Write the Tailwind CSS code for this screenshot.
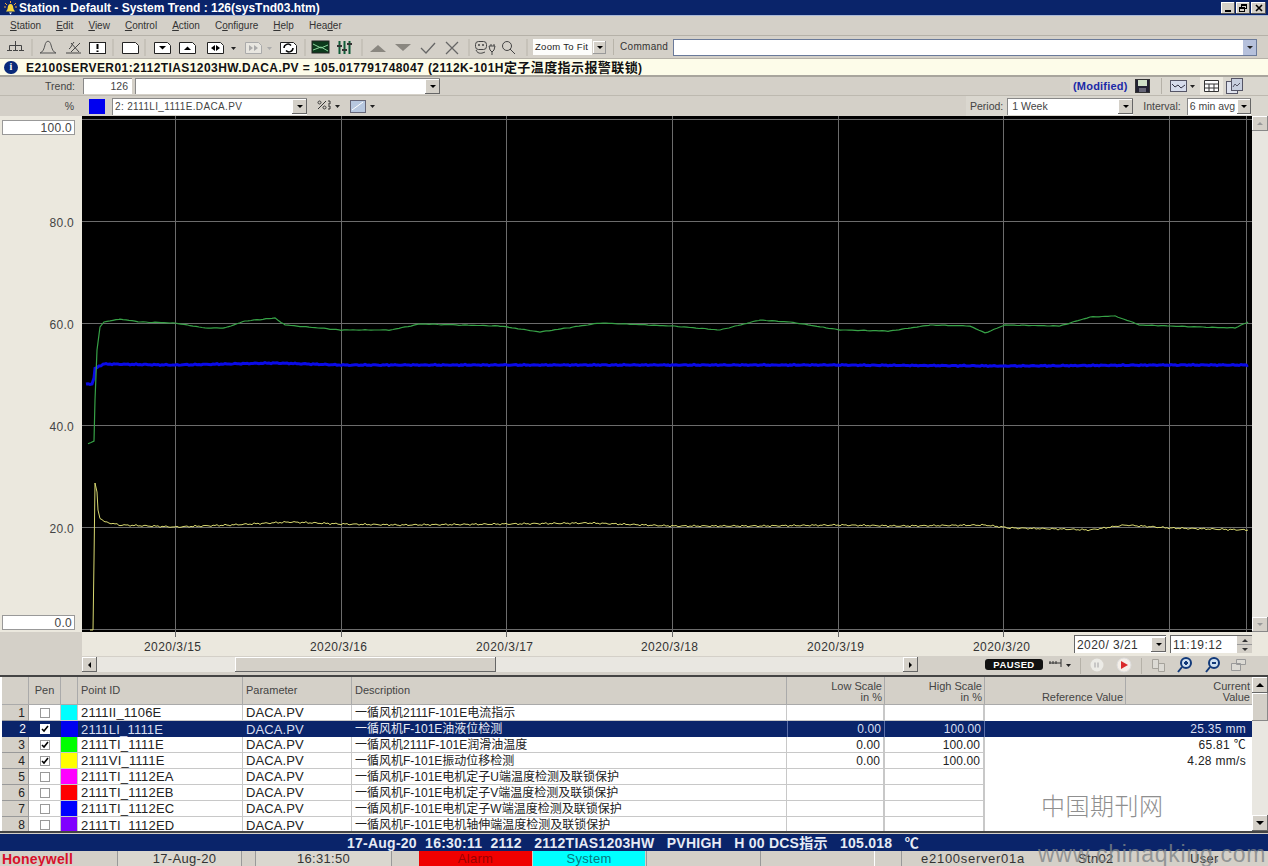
<!DOCTYPE html>
<html><head><meta charset="utf-8"><script src="https://cdn.jsdelivr.net/npm/@tailwindcss/browser@4"></script></head>
<body class="m-0 overflow-hidden">
<div class="relative w-[1268px] h-[866px] overflow-hidden flex flex-col bg-[#d4d0c8] text-[#222] text-[11px] leading-none font-['Liberation_Sans','Noto_Sans_CJK_SC',sans-serif]">

<!-- title -->
<div class="h-[16px] shrink-0 bg-[#0a246a] text-white flex items-center pl-[3px] pr-[2px] border-b border-[#a9b8d8]">
  <svg class="w-[15px] h-[14px]" viewBox="0 0 15 14"><path d="M7.5 3c-2 0-2.6 2-2.8 4-.2 1.800-1.200 2.500-1.700 3.500h9c-.5-1-1.500-1.700-1.700-3.500C10.100 5 9.500 3 7.500 3z" fill="#f5d63d"/><path d="M6 11.500h3l-1.500 2z" fill="#fff"/><path d="M2 2l2 2M13 2l-2 2M7.500 0v2M1 6h2M14 6h-2" stroke="#f2a53a"/></svg>
  <span class="ml-[1px] font-bold text-[12px]">Station - Default - System Trend : 126(sysTnd03.htm)</span>
  <div class="ml-auto flex gap-[1px]">
    <div class="w-[14px] h-[12px] bg-[#d4d0c8] text-black flex items-end justify-center pb-[2px] shadow-[inset_-1px_-1px_#555,inset_1px_1px_#fff]"><div class="w-[6px] h-[2px] bg-black"></div></div>
    <div class="w-[14px] h-[12px] bg-[#d4d0c8] shadow-[inset_-1px_-1px_#555,inset_1px_1px_#fff] relative"><div class="absolute left-[5px] top-[2px] w-[6px] h-[5px] border border-black border-t-2"></div><div class="absolute left-[3px] top-[5px] w-[6px] h-[5px] bg-[#d4d0c8] border border-black border-t-2"></div></div>
    <div class="w-[15px] h-[12px] bg-[#d4d0c8] shadow-[inset_-1px_-1px_#555,inset_1px_1px_#fff] flex items-center justify-center"><svg class="w-[8px] h-[8px]" viewBox="0 0 8 8"><path d="M1 1l6 6M7 1l-6 6" stroke="#000" stroke-width="1.600"/></svg></div>
  </div>
</div>

<!-- menu -->
<div class="h-[20px] shrink-0 flex items-center pl-[10px] gap-[15px] text-[10px] text-[#333] border-b border-[#b5b1a8]">
  <span><u>S</u>tation</span><span><u>E</u>dit</span><span><u>V</u>iew</span><span><u>C</u>ontrol</span><span><u>A</u>ction</span><span>C<u>o</u>nfigure</span><span><u>H</u>elp</span><span>Hea<u>d</u>er</span>
</div>

<!-- toolbar -->
<div class="h-[23px] shrink-0 flex items-center relative border-b border-[#b5b1a8]">
  <svg class="w-[674px] h-[22px] shrink-0" viewBox="0 36 674 22" fill="none" stroke="#444" stroke-width="1">
    <path d="M15.500 41v4M9.500 50v-4.500h12V50M15.500 45v5M7 50.500h5M19 50.500h5M13 50.500h5"/>
    <path d="M32 39v17M113 39v17M145 39v17M305 39v17M362 39v17M469 39v17M527 39v17" stroke="#b8b4aa"/>
    <path d="M40 53c3-1 4-4 5-8 1-5 5-5 6 0 1 4 2 7 5 8z" stroke="#555"/>
    <path d="M66 53h15M71 43l8 9M80 43l-9 9M69 49c2-1 3-5 5-7" stroke="#444"/>
    <rect x="89.500" y="42.500" width="16" height="11" fill="#fff" stroke="#222"/><path d="M97.500 44v5M97.500 50.500v1.500" stroke="#000" stroke-width="2"/>
    <path d="M122.500 42.500h13l3 3v8h-16z" fill="#fff" stroke="#222"/>
    <path d="M154.500 42.500h13l3 3v8h-16z" fill="#fff" stroke="#222"/><path d="M159 46h7l-3.500 3.500z" fill="#000" stroke="none"/>
    <path d="M179.500 42.500h13l3 3v8h-16z" fill="#fff" stroke="#222"/><path d="M184 50h7l-3.500-3.500z" fill="#000" stroke="none"/>
    <path d="M207.500 42.500h13l3 3v8h-16z" fill="#fff" stroke="#222"/><path d="M215 45v6l-4-3zM216 45v6l4-3z" fill="#000" stroke="none"/>
    <path d="M231 47h5l-2.500 3z" fill="#222" stroke="none"/>
    <path d="M245.500 42.500h13l3 3v8h-16z" fill="#e8e6e0" stroke="#aaa"/><path d="M249 45v6l4-3zM254 45v6l4-3z" fill="#aaa" stroke="none"/>
    <path d="M267 47h5l-2.500 3z" fill="#aaa" stroke="none"/>
    <path d="M280.500 42.500h13l3 3v8h-16z" fill="#fff" stroke="#222"/><path d="M284 48a4 4 0 0 1 7-2.500M293 48a4 4 0 0 1-7 2.500" stroke="#000" stroke-width="1.500"/>
    <rect x="312" y="41" width="17" height="12" fill="#0c3a1c" stroke="#222"/><path d="M313 44l8 4 7-3M313 50l8-3 7 4" stroke="#8fd9a0"/>
    <path d="M339.500 41v13M344.500 41v13M349.500 41v13" stroke="#0f5c38" stroke-width="2"/><path d="M337 46h5M342 50h5M347 44h5" stroke="#333" stroke-width="2"/>
    <path d="M370 52l8-7 8 7z" fill="#8a8780" stroke="none"/><path d="M395 44h16l-8 7z" fill="#8a8780" stroke="none"/>
    <path d="M421 48l5 5 9-10" stroke="#666" stroke-width="1.300"/><path d="M446 42l12 12M458 42l-12 12" stroke="#666" stroke-width="1.300"/>
    <rect x="475.500" y="41.500" width="11" height="8" rx="3"/><path d="M478 45h2M482 45h2" stroke-width="1.500"/><path d="M476 50c2 5 7 3 9 2M489 46h6l-1 4-2 2-2-2zM491 44v2M494 44v2M492 52v3"/>
    <circle cx="507" cy="46" r="4.500"/><path d="M510 49l5 5"/>
  </svg>
  <div class="absolute left-[533px] top-[3px] w-[74px] h-[16px] flex items-center">
    <div class="w-[59px] h-full bg-[#fdfdfb] flex items-center pl-[2px] text-[9.500px] tracking-[0.3px]">Zoom To Fit</div>
    <div class="w-[13px] h-[13px] ml-[1px] bg-[#d4d0c8] flex items-center justify-center shadow-[inset_-1px_-1px_#999,inset_1px_1px_#fff]"><div class="border-x-[3px] border-x-transparent border-t-[3px] border-t-black"></div></div>
  </div>
  <div class="absolute left-[613px] top-[3px] h-[16px] border-l border-[#b8b4aa]"></div>
  <span class="absolute left-[620px] top-[6px] text-[10px] tracking-[0.3px] text-[#333]">Command</span>
  <div class="absolute left-[673px] top-[3px] w-[584px] h-[17px] bg-white border border-[#6a7a9a] flex justify-end">
    <div class="w-[13px] h-full bg-[#b6c1dc] flex items-center justify-center"><div class="border-x-[3px] border-x-transparent border-t-[3px] border-t-[#222]"></div></div>
  </div>
</div>

<!-- message -->
<div class="h-[18px] shrink-0 bg-[#fdfce9] border-b-2 border-[#a8a59d] flex items-center pl-[4px] gap-[8px] font-bold text-[12px] text-[#111]">
  <span class="w-[14px] h-[13px] rounded-full bg-[#0a2a7a] text-white text-[10px] flex items-center justify-center font-['Liberation_Serif']">i</span>
  <span class="tracking-[0.42px] whitespace-nowrap">E2100SERVER01:2112TIAS1203HW.DACA.PV = 105.017791748047 (2112K-101H<span class="text-[13px]">定子温度指示报警联锁</span>)</span>
</div>

<!-- trend row -->
<div class="h-[19px] shrink-0 flex items-center relative border-b border-[#bdb9b0] text-[10.500px] text-[#444]">
  <span class="w-[75px] text-right">Trend:</span>
  <div class="ml-[8px] w-[49px] h-[16px] bg-white border-l border-t border-[#888] flex items-center justify-end pr-[4px]">126</div>
  <div class="ml-[3px] w-[305px] h-[16px] bg-white border-l border-t border-[#888] flex justify-end items-center">
    <div class="w-[15px] h-[15px] bg-[#d4d0c8] flex items-center justify-center shadow-[inset_-1px_-1px_#666,inset_1px_1px_#fff]"><div class="border-x-[3px] border-x-transparent border-t-[3px] border-t-black"></div></div>
  </div>
  <div class="absolute right-0 top-0 w-[198px] h-[18px] bg-[#dad7cf] flex items-center pl-[3px]">
    <span class="font-bold text-[11px] text-[#1a2aa8] tracking-[0.2px]">(Modified)</span>
    <svg class="ml-[7px] w-[15px] h-[14px]" viewBox="0 0 15 14"><rect x=".5" y=".5" width="14" height="13" fill="#223" stroke="#333"/><rect x="3" y="1" width="9" height="6" fill="#cfe0c8"/><rect x="4" y="9" width="7" height="4" fill="#667"/></svg>
    <div class="ml-[11px] h-[16px] border-l border-[#b5b1a8]"></div>
    <svg class="ml-[8px] w-[26px] h-[14px]" viewBox="0 0 26 14" fill="none"><rect x=".5" y="1.500" width="16" height="11" fill="#d6dcec" stroke="#556"/><path d="M2 5l3 3 3-2 3 3 4-3" stroke="#334"/><path d="M20 6h5l-2.500 3z" fill="#222"/></svg>
    <div class="ml-[4px] w-[23px] h-[18px] bg-[#ece9e0] flex items-center justify-center"><svg class="w-[15px] h-[12px]" viewBox="0 0 15 12" fill="#fff" stroke="#333"><path d="M.5.5h14v11H.5zM.5 4h14M.5 8h14M5 4v7.500M10 4v7.500"/></svg></div>
    <svg class="ml-[3px] w-[17px] h-[16px]" viewBox="0 0 17 16" fill="none" stroke="#556"><rect x=".5" y="3.500" width="11" height="12" fill="#dfe3ee"/><rect x="5.500" y=".5" width="11" height="12" fill="#c8cfdf"/><path d="M7 9l2-3 2 2 3-3"/></svg>
  </div>
</div>

<!-- pen row -->
<div class="h-[20px] shrink-0 flex items-center relative text-[10.500px] text-[#444]">
  <span class="w-[75px] text-right pr-[1px]">%</span>
  <div class="ml-[14px] w-[16px] h-[15px] bg-[#0000f0]"></div>
  <div class="ml-[7px] w-[195px] h-[17px] bg-white border-l border-t border-[#888] flex items-center justify-between pl-[2px] text-[10px] tracking-[0.35px]">
    <span>2: 2111LI_1111E.DACA.PV</span>
    <div class="w-[15px] h-[15px] bg-[#d4d0c8] flex items-center justify-center shadow-[inset_-1px_-1px_#666,inset_1px_1px_#fff]"><div class="border-x-[3px] border-x-transparent border-t-[3px] border-t-black"></div></div>
  </div>
  <svg class="ml-[10px] w-[60px] h-[16px]" viewBox="0 0 60 16" fill="none"><path d="M1 11l8-8M2.500 3a1.500 1.500 0 1 0 .01 0M7.500 8a1.500 1.500 0 1 0 .01 0" stroke="#333"/><path d="M11 3h2v3h-2M11 8h2v3h-2" stroke="#333"/><path d="M18 7h5l-2.500 3z" fill="#222"/><rect x="33.500" y="2.500" width="15" height="12" fill="#b7c7df" stroke="#667"/><path d="M35 12l11-8" stroke="#fff"/><path d="M53 7h5l-2.500 3z" fill="#222"/></svg>
  <div class="absolute right-0 top-0 h-[20px] w-[302px] bg-[#dad7cf] flex items-center pl-[4px]">
    <span>Period:</span>
    <div class="ml-[4px] w-[126px] h-[17px] bg-white border-l border-t border-[#888] flex items-center justify-between pl-[4px]"><span>1 Week</span><div class="w-[15px] h-[15px] bg-[#d4d0c8] flex items-center justify-center shadow-[inset_-1px_-1px_#666,inset_1px_1px_#fff]"><div class="border-x-[3px] border-x-transparent border-t-[3px] border-t-black"></div></div></div>
    <span class="ml-[10px]">Interval:</span>
    <div class="ml-[6px] w-[64px] h-[17px] bg-white border-l border-t border-[#888] flex items-center justify-between pl-[2px]"><span>6 min avg</span><div class="w-[14px] h-[15px] bg-[#d4d0c8] flex items-center justify-center shadow-[inset_-1px_-1px_#666,inset_1px_1px_#fff]"><div class="border-x-[3px] border-x-transparent border-t-[3px] border-t-black"></div></div></div>
  </div>
</div>

<!-- chart row -->
<div class="h-[516px] shrink-0 flex">
  <div class="w-[82px] relative bg-[#ebe8de] text-[12px] text-[#444] tracking-[0.3px]">
    <div class="absolute left-[2px] top-[4px] w-[73px] h-[15px] bg-white border border-[#999] flex items-center justify-end pr-[2px]">100.0</div>
    <span class="absolute right-[8px] top-[101px]">80.0</span>
    <span class="absolute right-[8px] top-[203px]">60.0</span>
    <span class="absolute right-[8px] top-[305px]">40.0</span>
    <span class="absolute right-[8px] top-[407px]">20.0</span>
    <div class="absolute left-[2px] top-[499px] w-[73px] h-[15px] bg-white border border-[#999] flex items-center justify-end pr-[2px]">0.0</div>
  </div>
  <svg id="chart" class="w-[1170px] h-[516px] bg-black" viewBox="82 116 1170 516" fill="none">
    <g stroke="#6c6c6c" stroke-width="1">
      <path d="M175.500 116v516M341.500 116v516M506.500 116v516M672.500 116v516M838.500 116v516M1003.500 116v516M1169.500 116v516M1246.500 116v516"/>
      <path d="M82 119.500h1170M82 221.500h1170M82 323.500h1170M82 425.500h1170M82 527.500h1170M82 629.500h1170"/>
    </g>
    <polyline id="b" stroke="#0a0ae6" stroke-width="3" points="86,384 92,384 94,378 95,369 99,366 104,364 175,365 275,363 341,365 506,365 672,365 838,365 1003,366 1169,365 1248,365"/>
    <polyline id="g" stroke="#37a247" stroke-width="1.200" points="88,444 94,441 95,400 97,350 100,327 104,322 120,319 140,322 175,323 205,328 225,328 245,321 275,318 285,325 341,330 390,330 420,324 500,326 540,332 600,323 672,326 720,330 760,320 790,322 840,330 890,331 930,325 970,326 985,333 1005,325 1060,326 1090,317 1115,316 1140,325 1200,327 1235,328 1248,322"/>
    <polyline id="y" stroke="#d8d870" stroke-width="1" points="90,630 93,630 94,560 95,483 97,492 98,510 100,518 105,522 120,525 150,526 175,527 230,525 290,522 341,524 400,525 506,524 590,523 672,526 760,526 838,525 900,526 985,525 1010,528 1060,529 1090,530 1125,525 1170,528 1248,530"/>
  </svg>
  <div class="w-[16px] flex flex-col bg-[#e8e6e0]">
    <div class="h-[15px] bg-[#d4d0c8] flex items-center justify-center shadow-[inset_-1px_-1px_#888,inset_1px_1px_#fff]"><div class="border-x-[3px] border-x-transparent border-b-[3px] border-b-[#999]"></div></div>
    <div class="flex-1"></div>
    <div class="h-[15px] bg-[#d4d0c8] flex items-center justify-center shadow-[inset_-1px_-1px_#888,inset_1px_1px_#fff]"><div class="border-x-[3px] border-x-transparent border-t-[3px] border-t-[#999]"></div></div>
  </div>
</div>

<!-- time axis -->
<div class="h-[24px] shrink-0 flex">
  <div class="w-[82px]"></div>
  <div class="flex-1 bg-[#ebe8de] relative text-[12px] text-[#333] tracking-[0.45px]">
    <div class="absolute left-[93px] top-0 w-px h-[5px] bg-[#666]"></div>
    <div class="absolute left-[259px] top-0 w-px h-[5px] bg-[#666]"></div>
    <div class="absolute left-[424px] top-0 w-px h-[5px] bg-[#666]"></div>
    <div class="absolute left-[590px] top-0 w-px h-[5px] bg-[#666]"></div>
    <div class="absolute left-[756px] top-0 w-px h-[5px] bg-[#666]"></div>
    <div class="absolute left-[921px] top-0 w-px h-[5px] bg-[#666]"></div>
    <span class="absolute left-[62px] top-[9px]">2020/3/15</span>
    <span class="absolute left-[228px] top-[9px]">2020/3/16</span>
    <span class="absolute left-[394px] top-[9px]">2020/3/17</span>
    <span class="absolute left-[559px] top-[9px]">2020/3/18</span>
    <span class="absolute left-[725px] top-[9px]">2020/3/19</span>
    <span class="absolute left-[891px] top-[9px]">2020/3/20</span>
    <div class="absolute left-[992px] top-[3px] w-[92px] h-[18px] bg-white border-l border-t border-[#666] flex items-center justify-between pl-[2px]">
      <span>2020/ 3/21</span><div class="w-[15px] h-[15px] bg-[#d4d0c8] flex items-center justify-center shadow-[inset_-1px_-1px_#666,inset_1px_1px_#fff]"><div class="border-x-[3px] border-x-transparent border-t-[3px] border-t-black"></div></div>
    </div>
    <div class="absolute left-[1088px] top-[3px] w-[82px] h-[18px] bg-white border-l border-t border-[#666] flex items-center justify-between pl-[2px]">
      <span>11:19:12</span>
      <div class="w-[15px] h-full flex flex-col bg-[#d4d0c8]"><div class="flex-1 flex items-center justify-center border-b border-[#999]"><div class="border-x-[3px] border-x-transparent border-b-[3px] border-b-[#333]"></div></div><div class="flex-1 flex items-center justify-center"><div class="border-x-[3px] border-x-transparent border-t-[3px] border-t-[#333]"></div></div></div>
    </div>
  </div>
</div>

<!-- h scroll -->
<div class="h-[19px] shrink-0 flex items-start pt-[1px] relative">
  <div class="ml-[82px] w-[836px] h-[15px] shrink-0 bg-[#e9e7e1] flex items-center relative">
    <div class="w-[15px] h-[15px] bg-[#d4d0c8] flex items-center justify-center shadow-[inset_-1px_-1px_#666,inset_1px_1px_#fff]"><div class="border-y-[3px] border-y-transparent border-r-[3px] border-r-black"></div></div>
    <div class="absolute left-[153px] top-0 w-[261px] h-[15px] bg-[#d4d0c8] shadow-[inset_-1px_-1px_#666,inset_1px_1px_#fff]"></div>
    <div class="ml-auto w-[15px] h-[15px] bg-[#d4d0c8] flex items-center justify-center shadow-[inset_-1px_-1px_#666,inset_1px_1px_#fff]"><div class="border-y-[3px] border-y-transparent border-l-[3px] border-l-black"></div></div>
  </div>
  <div class="ml-[67px] mt-[2px] w-[58px] h-[11px] shrink-0 bg-[#111] rounded-[3px] text-white font-bold text-[9.500px] tracking-[0.4px] flex items-center justify-center">PAUSED</div>
  <svg class="ml-[5px] w-[220px] h-[18px] shrink-0" viewBox="0 0 220 18" fill="none">
    <path d="M1 6h12M13 2v8M2 4v3M5 4v3M8 4v3" stroke="#333"/><path d="M18 7h5l-2.500 3z" fill="#222"/>
    <path d="M32.500 1v16M93.500 1v16" stroke="#b5b1a8"/>
    <circle cx="49" cy="8" r="6.500" fill="#ecebe6"/><path d="M47 5.500v5M50 5.500v5" stroke="#bbb" stroke-width="1.500"/>
    <circle cx="76" cy="8" r="7" fill="#f5efe8" stroke="#ddd"/><path d="M73 4l7 4-7 4z" fill="#d92a2a"/>
    <path d="M104.500 2.500h6v9h-6zM110.500 6.500h6v8h-6z" stroke="#a5a29b" fill="#dcdad4"/>
    <circle cx="138" cy="6" r="5" fill="#cfe0f0" stroke="#123a7a" stroke-width="2"/><path d="M134 10l-4 5M136 6h4M138 4v4" stroke="#123a7a" stroke-width="2"/>
    <circle cx="166" cy="6" r="5" fill="#cfe0f0" stroke="#123a7a" stroke-width="2"/><path d="M162 10l-4 5M164 6h4" stroke="#123a7a" stroke-width="2"/>
    <path d="M183.500 6.500h9v7h-9zM188.500 2.500h9v5h-9z" stroke="#999" fill="#dcdad4"/>
  </svg>
</div>

<!-- table -->
<div class="h-[158px] shrink-0 border-y-2 border-[#444] flex bg-white">
  <div class="w-[1252px] text-[12px] grid grid-cols-[29px_32px_17px_165px_109px_435px_98px_100px_141px_126px] grid-rows-[28px_repeat(8,16px)] overflow-hidden">
    <div class="bg-[#d4d0c8] border-r border-b border-[#aaa] ml-[2px]"></div>
    <div class="bg-[#d4d0c8] border-r border-b border-[#aaa] flex items-center justify-center text-[11px] text-[#444]">Pen</div>
    <div class="bg-[#d4d0c8] border-r border-b border-[#aaa]"></div>
    <div class="bg-[#d4d0c8] border-r border-b border-[#aaa] flex items-center pl-[3px] text-[11px] text-[#444]">Point ID</div>
    <div class="bg-[#d4d0c8] border-r border-b border-[#aaa] flex items-center pl-[3px] text-[11px] text-[#444]">Parameter</div>
    <div class="bg-[#d4d0c8] border-r border-b border-[#aaa] flex items-center pl-[3px] text-[11px] text-[#444]">Description</div>
    <div class="bg-[#d4d0c8] border-r border-b border-[#aaa] text-right pr-[2px] pt-[4px] text-[11px] leading-[11px] text-[#444]">Low Scale<br>in %</div>
    <div class="bg-[#d4d0c8] border-r border-b border-[#aaa] text-right pr-[2px] pt-[4px] text-[11px] leading-[11px] text-[#444]">High Scale<br>in %</div>
    <div class="bg-[#d4d0c8] border-r border-b border-[#aaa] text-right pr-[2px] pt-[15px] text-[11px] leading-[11px] text-[#444]">Reference Value</div>
    <div class="bg-[#d4d0c8] border-b border-[#aaa] text-right pr-[2px] pt-[4px] text-[11px] leading-[11px] text-[#444]">Current<br>Value</div>

    <!-- row 1 -->
    <div class="ml-[2px] bg-[#d4d0c8] border-r border-b border-[#999] flex items-center justify-end pr-[3px]">1</div>
    <div class="border-r border-b border-[#c8c8c8] flex items-center justify-center"><span class="w-[10px] h-[10px] bg-white border border-[#999]"></span></div>
    <div class="bg-[#00ffff] border-r border-b border-[#c8c8c8]"></div>
    <div class="border-r border-b border-[#c8c8c8] flex items-center pl-[3px] text-[13px] tracking-[0.2px]">2111II_1106E</div>
    <div class="border-r border-b border-[#c8c8c8] flex items-center pl-[3px] text-[13px] tracking-[0.1px]">DACA.PV</div>
    <div class="border-r border-b border-[#c8c8c8] flex items-center pl-[3px]">一循风机2111F-101E电流指示</div>
    <div class="border-r-2 border-b border-[#c8c8c8]"></div>
    <div class="border-r-2 border-b border-[#c8c8c8]"></div>
    <div></div><div></div>

    <!-- row 2 selected -->
    <div class="ml-[2px] bg-[#0a246a] text-white flex items-center justify-end pr-[3px]">2</div>
    <div class="bg-[#0a246a] flex items-center justify-center"><span class="w-[10px] h-[10px] bg-white flex items-center justify-center"><svg class="w-[8px] h-[8px]" viewBox="0 0 8 8" fill="none"><path d="M1 4l2 2 4-5" stroke="#000" stroke-width="1.600"/></svg></span></div>
    <div class="bg-[#0000f0]"></div>
    <div class="bg-[#0a246a] text-[#d8def0] flex items-center pl-[3px] text-[13px] tracking-[0.2px]">2111LI_1111E</div>
    <div class="bg-[#0a246a] text-[#d8def0] flex items-center pl-[3px] text-[13px] tracking-[0.1px]">DACA.PV</div>
    <div class="bg-[#0a246a] text-[#e8ecf5] flex items-center pl-[3px]">一循风机F-101E油液位检测</div>
    <div class="bg-[#0a246a] text-[#d8def0] border-x border-[#5a6ea8] flex items-center justify-end pr-[3px] tracking-[0.1px]">0.00</div>
    <div class="bg-[#0a246a] text-[#d8def0] border-r border-[#5a6ea8] flex items-center justify-end pr-[3px] tracking-[0.1px]">100.00</div>
    <div class="bg-[#0a246a]"></div>
    <div class="bg-[#0a246a] text-[#d8def0] flex items-center justify-end pr-[6px] tracking-[0.3px]">25.35 mm</div>

    <!-- row 3 -->
    <div class="ml-[2px] bg-[#d4d0c8] border-r border-b border-[#999] flex items-center justify-end pr-[3px]">3</div>
    <div class="border-r border-b border-[#c8c8c8] flex items-center justify-center"><span class="w-[10px] h-[10px] bg-white border border-[#999] flex items-center justify-center"><svg class="w-[8px] h-[8px]" viewBox="0 0 8 8" fill="none"><path d="M1 4l2 2 4-5" stroke="#000" stroke-width="1.600"/></svg></span></div>
    <div class="bg-[#00ff00] border-r border-b border-[#c8c8c8]"></div>
    <div class="border-r border-b border-[#c8c8c8] flex items-center pl-[3px] text-[13px] tracking-[0.2px]">2111TI_1111E</div>
    <div class="border-r border-b border-[#c8c8c8] flex items-center pl-[3px] text-[13px] tracking-[0.1px]">DACA.PV</div>
    <div class="border-r border-b border-[#c8c8c8] flex items-center pl-[3px]">一循风机2111F-101E润滑油温度</div>
    <div class="border-r-2 border-b border-[#c8c8c8] flex items-center justify-end pr-[3px] tracking-[0.1px]">0.00</div>
    <div class="border-r-2 border-b border-[#c8c8c8] flex items-center justify-end pr-[3px] tracking-[0.1px]">100.00</div>
    <div></div>
    <div class="flex items-center justify-end pr-[6px] tracking-[0.3px]">65.81 ℃</div>

    <!-- row 4 -->
    <div class="ml-[2px] bg-[#d4d0c8] border-r border-b border-[#999] flex items-center justify-end pr-[3px]">4</div>
    <div class="border-r border-b border-[#c8c8c8] flex items-center justify-center"><span class="w-[10px] h-[10px] bg-white border border-[#999] flex items-center justify-center"><svg class="w-[8px] h-[8px]" viewBox="0 0 8 8" fill="none"><path d="M1 4l2 2 4-5" stroke="#000" stroke-width="1.600"/></svg></span></div>
    <div class="bg-[#ffff00] border-r border-b border-[#c8c8c8]"></div>
    <div class="border-r border-b border-[#c8c8c8] flex items-center pl-[3px] text-[13px] tracking-[0.2px]">2111VI_1111E</div>
    <div class="border-r border-b border-[#c8c8c8] flex items-center pl-[3px] text-[13px] tracking-[0.1px]">DACA.PV</div>
    <div class="border-r border-b border-[#c8c8c8] flex items-center pl-[3px]">一循风机F-101E振动位移检测</div>
    <div class="border-r-2 border-b border-[#c8c8c8] flex items-center justify-end pr-[3px] tracking-[0.1px]">0.00</div>
    <div class="border-r-2 border-b border-[#c8c8c8] flex items-center justify-end pr-[3px] tracking-[0.1px]">100.00</div>
    <div></div>
    <div class="flex items-center justify-end pr-[6px] tracking-[0.3px]">4.28 mm/s</div>

    <!-- row 5 -->
    <div class="ml-[2px] bg-[#d4d0c8] border-r border-b border-[#999] flex items-center justify-end pr-[3px]">5</div>
    <div class="border-r border-b border-[#c8c8c8] flex items-center justify-center"><span class="w-[10px] h-[10px] bg-white border border-[#999]"></span></div>
    <div class="bg-[#ff00ff] border-r border-b border-[#c8c8c8]"></div>
    <div class="border-r border-b border-[#c8c8c8] flex items-center pl-[3px] text-[13px] tracking-[0.2px]">2111TI_1112EA</div>
    <div class="border-r border-b border-[#c8c8c8] flex items-center pl-[3px] text-[13px] tracking-[0.1px]">DACA.PV</div>
    <div class="border-r border-b border-[#c8c8c8] flex items-center pl-[3px]">一循风机F-101E电机定子U端温度检测及联锁保护</div>
    <div class="border-r-2 border-b border-[#c8c8c8]"></div>
    <div class="border-r-2 border-b border-[#c8c8c8]"></div>
    <div></div><div></div>

    <!-- row 6 -->
    <div class="ml-[2px] bg-[#d4d0c8] border-r border-b border-[#999] flex items-center justify-end pr-[3px]">6</div>
    <div class="border-r border-b border-[#c8c8c8] flex items-center justify-center"><span class="w-[10px] h-[10px] bg-white border border-[#999]"></span></div>
    <div class="bg-[#ff0000] border-r border-b border-[#c8c8c8]"></div>
    <div class="border-r border-b border-[#c8c8c8] flex items-center pl-[3px] text-[13px] tracking-[0.2px]">2111TI_1112EB</div>
    <div class="border-r border-b border-[#c8c8c8] flex items-center pl-[3px] text-[13px] tracking-[0.1px]">DACA.PV</div>
    <div class="border-r border-b border-[#c8c8c8] flex items-center pl-[3px]">一循风机F-101E电机定子V端温度检测及联锁保护</div>
    <div class="border-r-2 border-b border-[#c8c8c8]"></div>
    <div class="border-r-2 border-b border-[#c8c8c8]"></div>
    <div></div><div></div>

    <!-- row 7 -->
    <div class="ml-[2px] bg-[#d4d0c8] border-r border-b border-[#999] flex items-center justify-end pr-[3px]">7</div>
    <div class="border-r border-b border-[#c8c8c8] flex items-center justify-center"><span class="w-[10px] h-[10px] bg-white border border-[#999]"></span></div>
    <div class="bg-[#0000ff] border-r border-b border-[#c8c8c8]"></div>
    <div class="border-r border-b border-[#c8c8c8] flex items-center pl-[3px] text-[13px] tracking-[0.2px]">2111TI_1112EC</div>
    <div class="border-r border-b border-[#c8c8c8] flex items-center pl-[3px] text-[13px] tracking-[0.1px]">DACA.PV</div>
    <div class="border-r border-b border-[#c8c8c8] flex items-center pl-[3px]">一循风机F-101E电机定子W端温度检测及联锁保护</div>
    <div class="border-r-2 border-b border-[#c8c8c8]"></div>
    <div class="border-r-2 border-b border-[#c8c8c8]"></div>
    <div></div><div></div>

    <!-- row 8 -->
    <div class="ml-[2px] bg-[#d4d0c8] border-r border-[#999] flex items-center justify-end pr-[3px]">8</div>
    <div class="border-r border-[#c8c8c8] flex items-center justify-center"><span class="w-[10px] h-[10px] bg-white border border-[#999]"></span></div>
    <div class="bg-[#8000ff] border-r border-[#c8c8c8]"></div>
    <div class="border-r border-[#c8c8c8] flex items-center pl-[3px] text-[13px] tracking-[0.2px]">2111TI_1112ED</div>
    <div class="border-r border-[#c8c8c8] flex items-center pl-[3px] text-[13px] tracking-[0.1px]">DACA.PV</div>
    <div class="border-r border-[#c8c8c8] flex items-center pl-[3px]">一循风机F-101E电机轴伸端温度检测及联锁保护</div>
    <div class="border-r-2 border-[#c8c8c8]"></div>
    <div class="border-r-2 border-[#c8c8c8]"></div>
    <div></div><div></div>
  </div>
  <div class="w-[16px] flex flex-col bg-[#e9e7e1]">
    <div class="h-[16px] bg-[#d4d0c8] flex items-center justify-center shadow-[inset_-1px_-1px_#666,inset_1px_1px_#fff]"><div class="border-x-[4px] border-x-transparent border-b-[4px] border-b-black"></div></div>
    <div class="h-[28px] bg-[#d4d0c8] shadow-[inset_-1px_-1px_#888,inset_1px_1px_#fff]"></div>
    <div class="flex-1"></div>
    <div class="h-[16px] bg-[#d4d0c8] flex items-center justify-center shadow-[inset_-1px_-1px_#666,inset_1px_1px_#fff]"><div class="border-x-[4px] border-x-transparent border-t-[4px] border-t-black"></div></div>
  </div>
</div>

<!-- alarm line -->
<div class="h-[17px] shrink-0 bg-[#0a246a] text-[#e6ebf5] font-bold text-[14px] tracking-[0.24px] flex items-center pl-[347px] whitespace-pre mt-[1px]">17-Aug-20  16:30:11  2112   2112TIAS1203HW   PVHIGH   H 00 DCS指示   105.018   ℃</div>

<!-- status bar -->
<div class="flex-1 flex items-center text-[13px] text-[#333] tracking-[0.3px]">
  <div class="w-[117px] pl-[2px] font-bold text-[#d8102a] text-[14px] tracking-[0.2px]">Honeywell</div>
  <div class="w-[125px] h-full border-x border-[#999] bg-[#dad7cf] flex items-center justify-center pl-[10px]">17-Aug-20</div>
  <div class="w-[13px] h-full"></div>
  <div class="w-[137px] h-full border-x border-[#999] bg-[#dad7cf] flex items-center justify-center">16:31:50</div>
  <div class="w-[27px] h-full"></div>
  <div class="w-[113px] h-full bg-[#f00000] flex items-center justify-center text-[#900]">Alarm</div>
  <div class="ml-[1px] w-[112px] h-full bg-[#00ffff] flex items-center justify-center text-[#05777f]">System</div>
  <div class="ml-[1px] w-[114px] h-full border-l border-[#999]"></div>
  <div class="w-[114px] h-full border-l border-[#999]"></div>
  <div class="w-[27px] h-full border-l border-white"></div>
  <div class="w-[139px] h-full border-l border-[#999] flex items-center justify-center pl-[4px] tracking-[0.7px]">e2100server01a</div>
  <div class="w-[138px] h-full flex items-center pl-[38px]">Stn02</div>
  <div class="flex-1 h-full flex items-center pl-[12px]">User</div>
</div>

<!-- watermarks -->
<div class="absolute left-[1041px] top-[795px] text-[24px] tracking-[0.5px] text-[#8f8f8f] font-['Liberation_Serif','Noto_Sans_CJK_SC',serif] font-light">中国期刊网</div>
<div class="absolute left-[1038px] top-[843px] text-[23px] tracking-[0.75px] text-[#7f8487]/80 whitespace-nowrap">www.chinaqking.com</div>
</div>
<script>
function j(id,a,step){var e=document.getElementById(id),p=e.getAttribute('points').trim().split(' ').map(function(s){return s.split(',').map(Number)}),o=[],i;
for(i=0;i<p.length-1;i++){var x0=p[i][0],y0=p[i][1],x1=p[i+1][0],y1=p[i+1][1];
 if(x1-x0<step*2){o.push(x0+','+y0);continue}
 for(var x=x0;x<x1;x+=step){var t=(x-x0)/(x1-x0),y=y0+(y1-y0)*t+a*(Math.sin(x*1.7)+Math.sin(x*0.63+1))/2;o.push(x+','+y.toFixed(1))}}
o.push(p[p.length-1].join(','));e.setAttribute('points',o.join(' '))}
j('y',1,2);j('b',.6,2);j('g',.3,3);
</script>
</body></html>
